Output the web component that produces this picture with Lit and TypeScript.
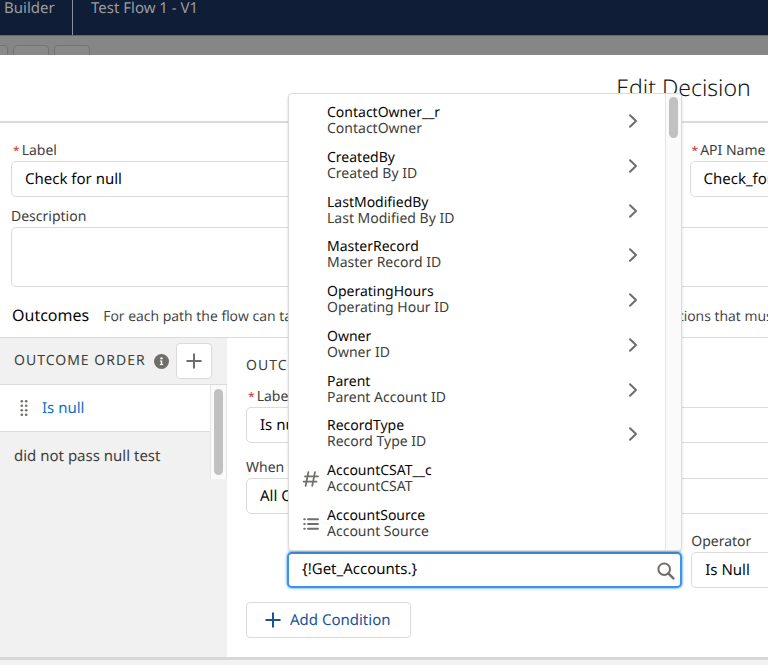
import { LitElement, html, css, svg, nothing } from "lit";
import { customElement, property } from "lit/decorators.js";

interface ResourceOption {
  name: string;
  detail: string;
  kind: "object" | "number" | "picklist";
}

const OPTIONS: ResourceOption[] = [
  { name: "ContactOwner__r", detail: "ContactOwner", kind: "object" },
  { name: "CreatedBy", detail: "Created By ID", kind: "object" },
  { name: "LastModifiedBy", detail: "Last Modified By ID", kind: "object" },
  { name: "MasterRecord", detail: "Master Record ID", kind: "object" },
  { name: "OperatingHours", detail: "Operating Hour ID", kind: "object" },
  { name: "Owner", detail: "Owner ID", kind: "object" },
  { name: "Parent", detail: "Parent Account ID", kind: "object" },
  { name: "RecordType", detail: "Record Type ID", kind: "object" },
  { name: "AccountCSAT__c", detail: "AccountCSAT", kind: "number" },
  { name: "AccountSource", detail: "Account Source", kind: "picklist" },
];

const ICONS = {
  chevron: svg`<path d="M5 3.2 L11 9 L5 14.8" fill="none" stroke="currentColor" stroke-width="2" stroke-linecap="round" stroke-linejoin="round"/>`,
  number: svg`<path d="M6.4 2 L3.6 16 M13 2 L10.2 16 M3 6.4 H16 M1.6 11.6 H14.6" fill="none" stroke="currentColor" stroke-width="1.7" stroke-linecap="round"/>`,
  picklist: svg`<path d="M6 4.2 H16 M6 9 H16 M6 13.8 H16" fill="none" stroke="currentColor" stroke-width="1.9" stroke-linecap="round"/><path d="M2.2 4.2 H2.8 M2.2 9 H2.8 M2.2 13.8 H2.8" stroke="currentColor" stroke-width="1.9" stroke-linecap="round"/>`,
  plus: svg`<path d="M9 2.2 V15.8 M2.2 9 H15.8" fill="none" stroke="currentColor" stroke-width="2" stroke-linecap="round"/>`,
  search: svg`<circle cx="7.2" cy="7.2" r="5.8" fill="none" stroke="currentColor" stroke-width="2"/><path d="M11.6 11.6 L16.4 16.4" stroke="currentColor" stroke-width="2.4" stroke-linecap="round"/>`,
  info: svg`<circle cx="9" cy="9" r="9" fill="currentColor"/><circle cx="9" cy="5.2" r="1.4" fill="#fff"/><path d="M7 7.8 H9.9 V12 H11 V13.2 H7 V12 H8.1 V9 H7 Z" fill="#fff"/>`,
  grip: svg`<g fill="currentColor"><circle cx="7.8" cy="2.2" r="1.3"/><circle cx="12.2" cy="2.2" r="1.3"/><circle cx="7.8" cy="6.7" r="1.3"/><circle cx="12.2" cy="6.7" r="1.3"/><circle cx="7.8" cy="11.2" r="1.3"/><circle cx="12.2" cy="11.2" r="1.3"/><circle cx="7.8" cy="15.7" r="1.3"/><circle cx="12.2" cy="15.7" r="1.3"/></g>`,
};

@customElement("flow-icon")
class FlowIcon extends LitElement {
  @property() name: keyof typeof ICONS = "plus";

  static styles = css`
    :host { display: inline-flex; width: 18px; height: 18px; flex: none; }
    .glyph { width: 100%; height: 100%; display: block; }
  `;

  render() {
    return html`<svg class="glyph" viewBox="0 0 18 18" aria-hidden="true">${ICONS[this.name]}</svg>`;
  }
}

@customElement("app-root")
class AppRoot extends LitElement {
  static styles = css`
    :host {
      display: block;
      min-height: 100vh;
      overflow: hidden;
      background: #f3f2f2;
      color: #3e3e3c;
      font-family: "Noto Sans", "Open Sans", sans-serif;
      font-size: 14px;
      line-height: 18px;
      text-rendering: geometricPrecision;
    }
    * { box-sizing: border-box; }
    button, input, select, textarea { font: inherit; color: inherit; margin: 0; text-rendering: inherit; }
    h1, h2, h3, p, ul { margin: 0; padding: 0; font-size: inherit; font-weight: 400; list-style: none; }

    .shell { width: 178%; }
    .bar {
      display: flex;
      height: 36px;
      background: #0f1e36;
      border-bottom: 1px solid #5f6875;
      color: #9b9c9e;
      font-size: 15px;
      line-height: 16px;
    }
    .app-name { width: 73px; padding-left: 4px; border-right: 1px solid #8b919b; }
    .flow-name { padding-left: 18px; }
    .tools {
      display: flex;
      gap: 5px;
      height: 19px;
      padding-top: 9px;
      margin-left: -28px;
      overflow: hidden;
    }
    .toolstrip { background: #868686; }
    .tool {
      width: 36px;
      height: 36px;
      flex: none;
      border: 1px solid #747474;
      border-radius: 4px;
      background: #898989;
    }

    .modal { background: #fff; border-bottom: 3px solid #d8d8d8; }
    .modal-head {
      display: flex;
      justify-content: center;
      align-items: center;
      height: 68px;
      padding-bottom: 2px;
      border-bottom: 2px solid #dddbda;
    }
    .title { font-size: 23px; line-height: 28px; font-weight: 300; color: #181818; }

    .form {
      display: grid;
      grid-template-columns: 1fr 1fr;
      column-gap: 12px;
      row-gap: 11px;
      padding: 19px 11px 0;
    }
    .wide { grid-column: 1 / -1; }
    .field { display: flex; flex-direction: column; gap: 1px; }
    .label { display: flex; gap: 2px; }
    .star { color: #c23934; font-size: 12px; }
    .indent { padding-left: 2px; }
    .control {
      width: 100%;
      height: 36px;
      padding: 0 13px;
      border: 1px solid #dddbda;
      border-radius: 5px;
      background: #fff;
      color: #080707;
      font-size: 15px;
      appearance: none;
      outline: none;
    }
    .control:not(.area) { padding-bottom: 1px; }
    .area { height: 60px; resize: none; display: block; }

    .intro { display: flex; align-items: baseline; gap: 14px; padding: 18px 12px 10px; line-height: 20px; }
    .intro-title { font-size: 16px; color: #080707; }
    .intro-text { font-family: "Open Sans", "Noto Sans", sans-serif; }

    .outcomes { display: flex; border-top: 1px solid #dddbda; }
    .side { width: 227px; flex: none; background: #f1f1f1; }
    .side-head { display: flex; align-items: center; height: 46px; padding-left: 14px; }
    .caps { letter-spacing: 1px; line-height: 18px; white-space: nowrap; }
    .info { width: 15px; height: 15px; color: #706e6b; margin-left: 8px; }
    .add-outcome {
      display: flex;
      align-items: center;
      justify-content: center;
      width: 36px;
      height: 36px;
      margin-left: auto;
      margin-right: 15px;
      padding: 0;
      border: 1px solid #dddbda;
      border-radius: 4px;
      background: #fff;
      color: #706e6b;
    }
    .side-scroll { display: flex; height: 95px; border-top: 1px solid #dddbda; }
    .side-list { flex: 1; }
    .outcome {
      display: flex;
      align-items: center;
      width: 100%;
      height: 47px;
      padding: 0 14px;
      border: 0;
      background: transparent;
      font-size: 15px;
      text-align: left;
    }
    .outcome.current {
      gap: 10px;
      background: #fff;
      border-bottom: 1px solid #dddbda;
      color: #0b6fcc;
    }
    .outcome.current flow-icon { color: #706e6b; }
    .track { flex: none; width: 17px; border: 1px solid #e4e4e4; border-width: 0 1px; background: #fafafa; }
    .thumb { width: 9px; border-radius: 5px; background: #c1c1c1; margin: 4px 3px; }
    .side-thumb { height: 86px; }

    .detail { flex: 1; padding: 19px 8px 19px 19px; }
    .detail-fields { display: flex; flex-direction: column; gap: 16px; padding-top: 13px; }
    .conditions {
      display: grid;
      grid-template-columns: 3fr 2fr 3fr;
      column-gap: 9px;
      align-items: end;
      padding: 19px 0 14px 41px;
    }
    .combo { position: relative; }
    .combo .control {
      border: 2px solid #3d94e6;
      box-shadow: 0 0 3px #1589ee;
      padding: 0 40px 2px 13px;
      display: block;
    }
    .search { position: absolute; right: 7px; top: 10px; color: #706e6b; }
    .menu {
      position: absolute;
      left: 1px;
      right: 0;
      bottom: calc(100% + 1px);
      z-index: 2;
      display: flex;
      height: 458px;
      border: 1px solid #dddbda;
      border-radius: 4px;
      background: #fff;
      box-shadow: 0 2px 3px rgba(0, 0, 0, 0.16);
    }
    .menu-list { flex: 1; display: flex; flex-direction: column; padding: 5px 0 4px; }
    .option {
      flex: 1;
      display: flex;
      align-items: center;
      padding: 0 22px 0 13px;
      gap: 7px;
    }
    .mark { width: 18px; display: flex; color: #706e6b; }
    .texts { flex: 1; display: flex; flex-direction: column; line-height: 16px; }
    .name { color: #080707; }
    .arrow { color: #706e6b; }
    .menu-track { flex: none; width: 16px; border-left: 1px solid #e4e4e4; background: #fafafa; border-radius: 0 4px 4px 0; }
    .menu-thumb { height: 41px; margin: 3px; }
    .add-condition {
      display: flex;
      align-items: center;
      gap: 8px;
      width: 165px;
      height: 36px;
      padding: 0 17px;
      border: 1px solid #dddbda;
      border-radius: 4px;
      background: #fff;
      color: #1b5297;
      font-size: 15px;
    }
  `;

  private label(text: string, id: string, required = false) {
    return html`<label class="label ${required ? "indent" : ""}" for=${id}
      >${required ? html`<span class="star">*</span>` : nothing}${text}</label>`;
  }

  private option(o: ResourceOption) {
    return html`
      <li class="option" role="option" aria-selected="false">
        <span class="mark">${o.kind === "object" ? nothing : html`<flow-icon name=${o.kind}></flow-icon>`}</span>
        <span class="texts"><span class="name">${o.name}</span><span>${o.detail}</span></span>
        ${o.kind === "object" ? html`<flow-icon class="arrow" name="chevron"></flow-icon>` : nothing}
      </li>`;
  }

  render() {
    return html`
      <div class="shell">
        <header class="bar">
          <span class="app-name">Builder</span>
          <span class="flow-name">Test Flow 1 - V1</span>
        </header>
        <div class="toolstrip">
          <div class="tools">
            <button class="tool" aria-label="Undo"></button>
            <button class="tool" aria-label="Redo"></button>
            <button class="tool" aria-label="Settings"></button>
          </div>
        </div>
        <main class="modal" role="dialog" aria-labelledby="title">
          <div class="modal-head"><h1 class="title" id="title">Edit Decision</h1></div>
          <div class="form">
            <div class="field">
              ${this.label("Label", "label", true)}
              <input class="control" id="label" .value=${"Check for null"} />
            </div>
            <div class="field">
              ${this.label("API Name", "api", true)}
              <input class="control" id="api" .value=${"Check_for_null"} />
            </div>
            <div class="field wide">
              ${this.label("Description", "description")}
              <textarea class="control area" id="description"></textarea>
            </div>
          </div>
          <div class="intro">
            <h2 class="intro-title">Outcomes</h2>
            <p class="intro-text">For each path the flow can take, create an outcome. For each outcome, specify the conditions that must be met for the flow to take that path.</p>
          </div>
          <section class="outcomes">
            <aside class="side">
              <div class="side-head">
                <h3 class="caps">OUTCOME ORDER</h3>
                <flow-icon class="info" name="info"></flow-icon>
                <button class="add-outcome" aria-label="Add outcome"><flow-icon name="plus"></flow-icon></button>
              </div>
              <div class="side-scroll">
                <div class="side-list">
                  <button class="outcome current"><flow-icon name="grip"></flow-icon>Is null</button>
                  <button class="outcome">did not pass null test</button>
                </div>
                <div class="track"><div class="thumb side-thumb"></div></div>
              </div>
            </aside>
            <div class="detail">
              <h3 class="caps">OUTCOME DETAILS</h3>
              <div class="detail-fields">
                <div class="field">
                  ${this.label("Label", "outcome-label", true)}
                  <input class="control" id="outcome-label" .value=${"Is null"} />
                </div>
                <div class="field">
                  ${this.label("When to Execute Outcome", "when")}
                  <select class="control" id="when"><option>All Conditions Are Met</option></select>
                </div>
              </div>
              <div class="conditions">
                <div class="combo">
                  <input class="control" id="resource" role="combobox" aria-expanded="true" aria-label="Resource" .value=${"{!Get_Accounts.}"} />
                  <flow-icon class="search" name="search"></flow-icon>
                  <div class="menu">
                    <ul class="menu-list" role="listbox">${OPTIONS.map((o) => this.option(o))}</ul>
                    <div class="menu-track"><div class="thumb menu-thumb"></div></div>
                  </div>
                </div>
                <div class="field">
                  ${this.label("Operator", "operator")}
                  <select class="control" id="operator"><option>Is Null</option></select>
                </div>
                <div class="field">
                  ${this.label("Value", "value")}
                  <input class="control" id="value" />
                </div>
              </div>
              <button class="add-condition"><flow-icon name="plus"></flow-icon>Add Condition</button>
            </div>
          </section>
        </main>
      </div>
    `;
  }
}
